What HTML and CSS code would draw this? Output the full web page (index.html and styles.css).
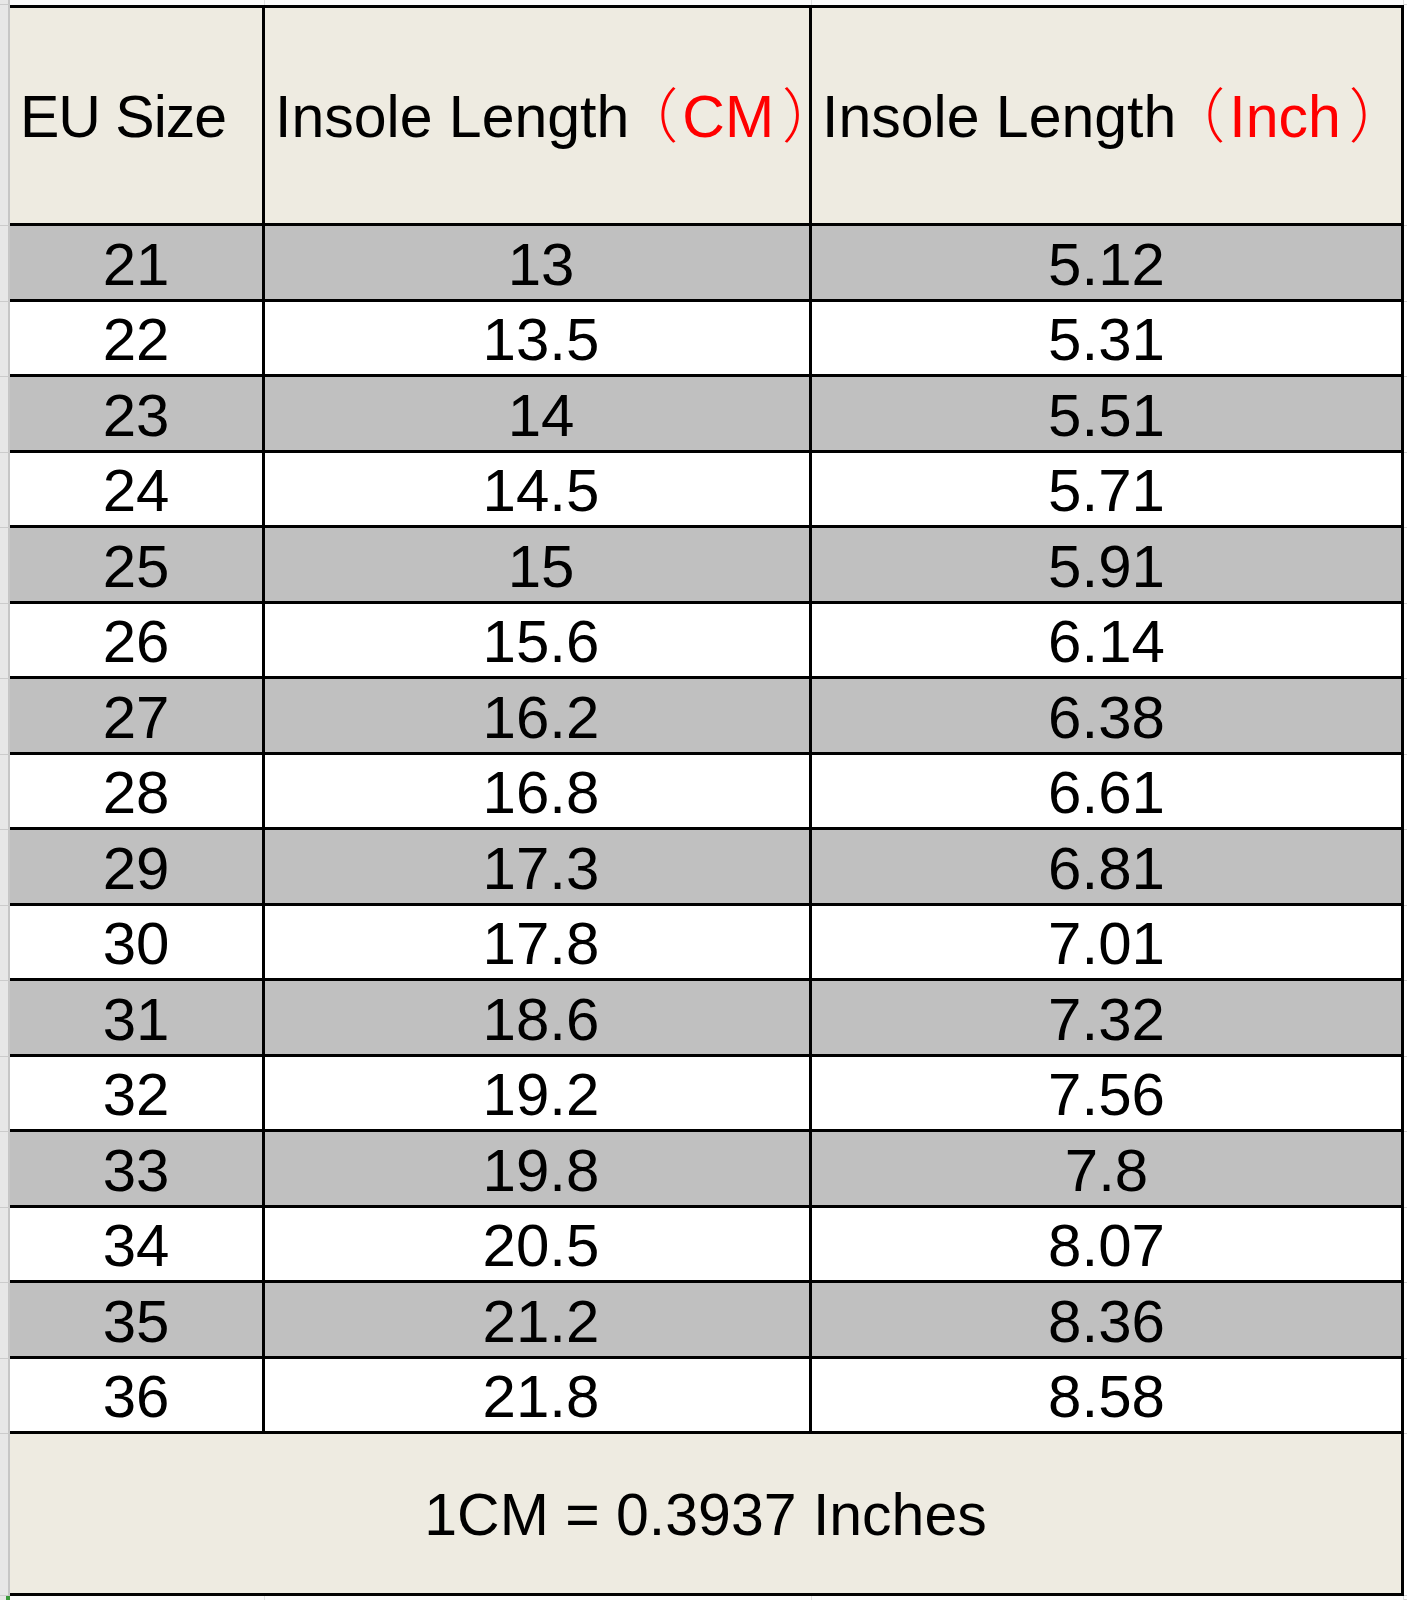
FILE: index.html
```html
<!DOCTYPE html>
<html lang="en">
<head>
<meta charset="utf-8">
<title>EU Size Chart</title>
<link rel="stylesheet" href="styles.css">
</head>
<body>
<div class="sheet">
  <div class="row strip">
    <div class="gut"></div><div class="blank"></div><div class="blank"></div><div class="blank"></div><div class="edge"></div>
  </div>
  <div class="row head">
    <div class="gut"></div>
    <div class="cell h eu">EU Size</div>
    <div class="cell h">Insole Lengt<span class="kern">h</span><span class="red"><span class="par l">（</span>CM<span class="par r">）</span></span></div>
    <div class="cell h">Insole Lengt<span class="kern">h</span><span class="red"><span class="par l">（</span>Inch<span class="par r">）</span></span></div>
    <div class="edge"></div>
  </div>
  <div class="row data g"><div class="gut"></div><div class="cell">21</div><div class="cell">13</div><div class="cell">5.12</div><div class="edge"></div></div>
  <div class="row data"><div class="gut"></div><div class="cell">22</div><div class="cell">13.5</div><div class="cell">5.31</div><div class="edge"></div></div>
  <div class="row data g"><div class="gut"></div><div class="cell">23</div><div class="cell">14</div><div class="cell">5.51</div><div class="edge"></div></div>
  <div class="row data"><div class="gut"></div><div class="cell">24</div><div class="cell">14.5</div><div class="cell">5.71</div><div class="edge"></div></div>
  <div class="row data g"><div class="gut"></div><div class="cell">25</div><div class="cell">15</div><div class="cell">5.91</div><div class="edge"></div></div>
  <div class="row data"><div class="gut"></div><div class="cell">26</div><div class="cell">15.6</div><div class="cell">6.14</div><div class="edge"></div></div>
  <div class="row data g"><div class="gut"></div><div class="cell">27</div><div class="cell">16.2</div><div class="cell">6.38</div><div class="edge"></div></div>
  <div class="row data"><div class="gut"></div><div class="cell">28</div><div class="cell">16.8</div><div class="cell">6.61</div><div class="edge"></div></div>
  <div class="row data g"><div class="gut"></div><div class="cell">29</div><div class="cell">17.3</div><div class="cell">6.81</div><div class="edge"></div></div>
  <div class="row data"><div class="gut"></div><div class="cell">30</div><div class="cell">17.8</div><div class="cell">7.01</div><div class="edge"></div></div>
  <div class="row data g"><div class="gut"></div><div class="cell">31</div><div class="cell">18.6</div><div class="cell">7.32</div><div class="edge"></div></div>
  <div class="row data"><div class="gut"></div><div class="cell">32</div><div class="cell">19.2</div><div class="cell">7.56</div><div class="edge"></div></div>
  <div class="row data g"><div class="gut"></div><div class="cell">33</div><div class="cell">19.8</div><div class="cell">7.8</div><div class="edge"></div></div>
  <div class="row data"><div class="gut"></div><div class="cell">34</div><div class="cell">20.5</div><div class="cell">8.07</div><div class="edge"></div></div>
  <div class="row data g"><div class="gut"></div><div class="cell">35</div><div class="cell">21.2</div><div class="cell">8.36</div><div class="edge"></div></div>
  <div class="row data"><div class="gut"></div><div class="cell">36</div><div class="cell">21.8</div><div class="cell">8.58</div><div class="edge"></div></div>
  <div class="row foot">
    <div class="gut"></div>
    <div class="cell note">1CM = 0.3937 Inches</div>
    <div class="edge"></div>
  </div>
  <div class="row strip bottom">
    <div class="gut"><span class="handle"></span></div><div class="blank"></div><div class="blank"></div><div class="blank"></div><div class="edge"></div>
  </div>
</div>
</body>
</html>
```

FILE: styles.css
```css
html, body {
  margin: 0;
  padding: 0;
  background: #ffffff;
}

body {
  width: 1407px;
  overflow: hidden;
  font-family: "Liberation Sans", "Noto Sans CJK SC", Arial, sans-serif;
  color: #000;
}

.sheet {
  display: flex;
  flex-direction: column;
}

.row {
  display: grid;
  grid-template-columns: 10px 255px 547px 592px 3px;
}

.row > div {
  box-sizing: border-box;
  min-width: 0;
}

.gut {
  background: #e7e7e7;
  border-right: 2px solid #c6c6c6;
  border-bottom: 1px solid #cbcbcb;
}

.edge {
  background: #ffffff;
  border-bottom: 1px solid #d6d6d6;
}

.strip {
  height: 5px;
}

.strip .blank {
  background: #fbfbfb;
  border-right: 1px solid #e0e0e0;
}

.strip.bottom {
  height: 4px;
}

.strip.bottom .gut {
  border-bottom: 0;
  position: relative;
}

.handle {
  position: absolute;
  right: -2px;
  top: 0;
  width: 4px;
  height: 4px;
  background: #3a9a3a;
}

.cell {
  border-right: 3px solid #000;
  border-bottom: 3px solid #000;
  white-space: nowrap;
}

/* header */
.head {
  height: 221px;
}

.head .cell {
  background: #eeebe1;
  border-top: 3px solid #000;
  display: flex;
  align-items: center;
  padding: 3px 0 0 10px;
  font-size: 59px;
  line-height: 59px;
}

.head .cell.eu {
  letter-spacing: -1px;
}

.kern {
  letter-spacing: -10px;
}

.red {
  color: #ff0000;
}

.par {
  font-weight: 300;
}

.par.l {
  letter-spacing: 4px;
}

.par.r {
  margin-left: 8px;
  letter-spacing: -40px;
}

/* data rows */
.data {
  height: 75.5px;
}

.data .cell {
  background: #ffffff;
  display: flex;
  align-items: center;
  justify-content: center;
  padding-top: 5px;
  font-size: 60px;
  line-height: 60px;
}

.data .cell:nth-child(3) {
  padding-left: 8px;
}

.data.g .cell {
  background: #c0c0c0;
}

/* footer */
.foot {
  height: 162px;
}

.foot .note {
  grid-column: 2 / 5;
  background: #eeebe1;
  display: flex;
  align-items: center;
  justify-content: center;
  padding-top: 3px;
  font-size: 59px;
  line-height: 59px;
}
```
